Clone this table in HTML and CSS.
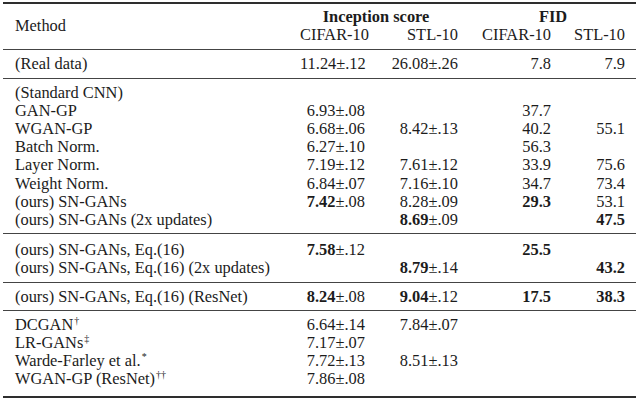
FILE: index.html
```html
<!DOCTYPE html>
<html>
<head>
<meta charset="utf-8">
<link rel="stylesheet" href="styles.css">
</head>
<body>
<table class="results">
  <colgroup>
    <col class="c-method">
    <col class="c-is1">
    <col class="c-is2">
    <col class="c-fid1">
    <col class="c-fid2">
  </colgroup>
  <thead>
    <tr class="first">
      <th rowspan="2" class="method">Method</th>
      <th colspan="2" class="grp grp-is">Inception score</th>
      <th colspan="2" class="grp grp-fid">FID</th>
    </tr>
    <tr class="last">
      <th class="num sub">CIFAR-10</th>
      <th class="num sub">STL-10</th>
      <th class="num sub">CIFAR-10</th>
      <th class="num sub">STL-10</th>
    </tr>
  </thead>
  <tbody>
    <tr class="first last">
      <td class="method">(Real data)</td>
      <td class="num">11.24±.12</td>
      <td class="num">26.08±.26</td>
      <td class="num">7.8</td>
      <td class="num">7.9</td>
    </tr>
  </tbody>
  <tbody>
    <tr class="first">
      <td class="method">(Standard CNN)</td>
      <td class="num"></td><td class="num"></td><td class="num"></td><td class="num"></td>
    </tr>
    <tr>
      <td class="method">GAN-GP</td>
      <td class="num">6.93±.08</td><td class="num"></td><td class="num">37.7</td><td class="num"></td>
    </tr>
    <tr>
      <td class="method">WGAN-GP</td>
      <td class="num">6.68±.06</td><td class="num">8.42±.13</td><td class="num">40.2</td><td class="num">55.1</td>
    </tr>
    <tr>
      <td class="method">Batch Norm.</td>
      <td class="num">6.27±.10</td><td class="num"></td><td class="num">56.3</td><td class="num"></td>
    </tr>
    <tr>
      <td class="method">Layer Norm.</td>
      <td class="num">7.19±.12</td><td class="num">7.61±.12</td><td class="num">33.9</td><td class="num">75.6</td>
    </tr>
    <tr>
      <td class="method">Weight Norm.</td>
      <td class="num">6.84±.07</td><td class="num">7.16±.10</td><td class="num">34.7</td><td class="num">73.4</td>
    </tr>
    <tr>
      <td class="method">(ours) SN-GANs</td>
      <td class="num"><b>7.42</b>±.08</td><td class="num">8.28±.09</td><td class="num"><b>29.3</b></td><td class="num">53.1</td>
    </tr>
    <tr class="last">
      <td class="method">(ours) SN-GANs (2x updates)</td>
      <td class="num"></td><td class="num"><b>8.69</b>±.09</td><td class="num"></td><td class="num"><b>47.5</b></td>
    </tr>
  </tbody>
  <tbody class="g2">
    <tr class="first">
      <td class="method">(ours) SN-GANs, Eq.(16)</td>
      <td class="num"><b>7.58</b>±.12</td><td class="num"></td><td class="num"><b>25.5</b></td><td class="num"></td>
    </tr>
    <tr class="last">
      <td class="method">(ours) SN-GANs, Eq.(16) (2x updates)</td>
      <td class="num"></td><td class="num"><b>8.79</b>±.14</td><td class="num"></td><td class="num"><b>43.2</b></td>
    </tr>
  </tbody>
  <tbody>
    <tr class="first last">
      <td class="method">(ours) SN-GANs, Eq.(16) (ResNet)</td>
      <td class="num"><b>8.24</b>±.08</td><td class="num"><b>9.04</b>±.12</td><td class="num"><b>17.5</b></td><td class="num"><b>38.3</b></td>
    </tr>
  </tbody>
  <tbody class="g4">
    <tr class="first">
      <td class="method">DCGAN<sup>†</sup></td>
      <td class="num">6.64±.14</td><td class="num">7.84±.07</td><td class="num"></td><td class="num"></td>
    </tr>
    <tr>
      <td class="method">LR-GANs<sup>‡</sup></td>
      <td class="num">7.17±.07</td><td class="num"></td><td class="num"></td><td class="num"></td>
    </tr>
    <tr>
      <td class="method">Warde-Farley et al.<sup>*</sup></td>
      <td class="num">7.72±.13</td><td class="num">8.51±.13</td><td class="num"></td><td class="num"></td>
    </tr>
    <tr class="last">
      <td class="method">WGAN-GP (ResNet)<sup>††</sup></td>
      <td class="num">7.86±.08</td><td class="num"></td><td class="num"></td><td class="num"></td>
    </tr>
  </tbody>
</table>
</body>
</html>
```

FILE: styles.css
```css
html, body {
  margin: 0;
  padding: 0;
  background: #ffffff;
}

body {
  padding: 2px 0 0 3px;
}

.results {
  width: 633px;
  table-layout: fixed;
  border-collapse: collapse;
  font-family: "Liberation Serif", "Times New Roman", serif;
  font-size: 16.4px;
  line-height: 18.2px;
  color: #1c1c1c;
  border-top: 2px solid #2e2e2e;
  border-bottom: 2px solid #2e2e2e;
}

.c-method { width: 297px; }
.c-is1 { width: 70px; }
.c-is2 { width: 93px; }
.c-fid1 { width: 93px; }
.c-fid2 { width: 80px; }

.results th,
.results td {
  padding: 0;
  white-space: nowrap;
  font-weight: normal;
  vertical-align: middle;
}

.results .method {
  text-align: left;
  padding-left: 12px;
}

.results .num {
  text-align: right;
  padding-right: 5px;
}

.results td.num:last-child,
.results th.num:last-child {
  padding-right: 11px;
}

.results th.grp {
  font-weight: bold;
  text-align: center;
}

.results th.grp-is {
  padding-right: 11px;
}

.results th.grp-fid {
  padding-left: 7px;
}

.results b {
  font-weight: bold;
}

.results thead tr.first th {
  padding-top: 4px;
}

.results thead tr.last th {
  padding-bottom: 5px;
}

.results thead th.method {
  padding-top: 4px;
  padding-bottom: 5px;
}

.results tbody {
  border-top: 1px solid #444444;
}

.results tbody tr.first td {
  padding-top: 5px;
}

.results tbody tr.last td {
  padding-bottom: 4px;
}

.results tbody.g2 tr.first td {
  padding-top: 7px;
}

.results tbody.g4 tr.last td {
  padding-bottom: 7px;
}

.results sup {
  font-size: 10px;
  line-height: 0;
  vertical-align: 6px;
  margin-left: 1px;
}
```
